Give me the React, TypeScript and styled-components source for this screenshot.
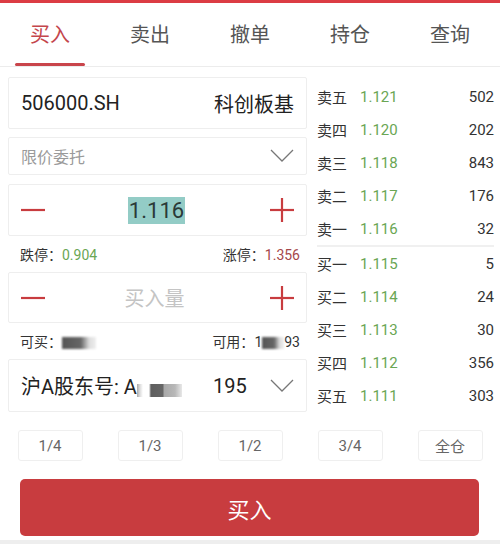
import React from 'react'
import styled, { createGlobalStyle } from 'styled-components'

const GlobalStyle = createGlobalStyle`
  html, body {
    margin: 0;
    padding: 0;
    background: #ffffff;
  }
  body {
    width: 500px;
    height: 544px;
    overflow: hidden;
    font-family: Roboto, "Noto Sans CJK SC", sans-serif;
    color: #333;
  }
`

const RED = '#c83c3f'
const GREEN = '#6aa654'

const tabs = ['买入', '卖出', '撤单', '持仓', '查询']

const asks = [
  { label: '卖五', price: '1.121', vol: '502' },
  { label: '卖四', price: '1.120', vol: '202' },
  { label: '卖三', price: '1.118', vol: '843' },
  { label: '卖二', price: '1.117', vol: '176' },
  { label: '卖一', price: '1.116', vol: '32' },
]

const bids = [
  { label: '买一', price: '1.115', vol: '5' },
  { label: '买二', price: '1.114', vol: '24' },
  { label: '买三', price: '1.113', vol: '30' },
  { label: '买四', price: '1.112', vol: '356' },
  { label: '买五', price: '1.111', vol: '303' },
]

const fractions = ['1/4', '1/3', '1/2', '3/4', '全仓']

const Chevron = () => (
  <svg width="24" height="14" viewBox="0 0 24 14">
    <polyline points="1,1 12,12 23,1" fill="none" stroke="#777" strokeWidth="1.3" />
  </svg>
)

const Minus = () => (
  <svg width="24" height="24" viewBox="0 0 24 24">
    <line x1="0" y1="12" x2="24" y2="12" stroke={RED} strokeWidth="2.2" />
  </svg>
)

const Plus = () => (
  <svg width="24" height="24" viewBox="0 0 24 24">
    <line x1="0" y1="12" x2="24" y2="12" stroke={RED} strokeWidth="2.2" />
    <line x1="12" y1="0" x2="12" y2="24" stroke={RED} strokeWidth="2.2" />
  </svg>
)

const App = () => {
  return (
    <Page>
      <GlobalStyle />
      <TopStrip />
      <TabBar>
        {tabs.map((t, i) => (
          <Tab key={t} $active={i === 0}>
            {t}
          </Tab>
        ))}
      </TabBar>

      <Main>
        {/* ORDER FORM */}
        <Form>
          <Field $h={52}>
            <CodeText>506000.SH</CodeText>
            <CodeText>科创板基</CodeText>
          </Field>

          <Field $h={38} $gap={8}>
            <Placeholder>限价委托</Placeholder>
            <Chevron />
          </Field>

          <Field $h={52} $gap={9}>
            <Minus />
            <PriceValue>1.116</PriceValue>
            <Plus />
          </Field>

          <InfoRow>
            <span>
              跌停：<Num $color={GREEN}>0.904</Num>
            </span>
            <span>
              涨停：<Num $color="#a5474a">1.356</Num>
            </span>
          </InfoRow>

          <Field $h={51}>
            <Minus />
            <QtyPlaceholder>买入量</QtyPlaceholder>
            <Plus />
          </Field>

          <InfoRow>
            <span>
              可买：<Blur $w={34} />
            </span>
            <span>
              可用：<Num $color="#333">1</Num>
              <Blur $w={22} />
              <Num $color="#333">93</Num>
            </span>
          </InfoRow>

          <Field $h={53}>
            <Holder>
              沪A股东号: A<HolderBlur />
              <HolderTail>195</HolderTail>
            </Holder>
            <Chevron />
          </Field>
        </Form>

        {/* ORDER BOOK */}
        <Book>
          {asks.map((r) => (
            <BookRow key={r.label}>
              <BookLabel>{r.label}</BookLabel>
              <BookPrice>{r.price}</BookPrice>
              <BookVol>{r.vol}</BookVol>
            </BookRow>
          ))}
          <BookDivider />
          {bids.map((r) => (
            <BookRow key={r.label}>
              <BookLabel>{r.label}</BookLabel>
              <BookPrice>{r.price}</BookPrice>
              <BookVol>{r.vol}</BookVol>
            </BookRow>
          ))}
        </Book>
      </Main>

      <FractionRow>
        {fractions.map((f) => (
          <FractionCell key={f}>
            <FractionButton>{f}</FractionButton>
          </FractionCell>
        ))}
      </FractionRow>

      <BuyButton>买入</BuyButton>
      <BottomStrip />
    </Page>
  )
}

export default App

const Page = styled.div`
  width: 500px;
  height: 544px;
  display: flex;
  flex-direction: column;
  background: #fff;
`

const TopStrip = styled.div`
  height: 3px;
  background: #dc3c44;
`

const TabBar = styled.div`
  height: 63px;
  display: flex;
  border-bottom: 1px solid #ececec;
`

const Tab = styled.div<{ $active?: boolean }>`
  flex: 1;
  position: relative;
  display: flex;
  align-items: center;
  justify-content: center;
  padding-bottom: 2px;
  font-size: 20px;
  color: ${(p) => (p.$active ? '#c4464c' : '#555')};

  &::after {
    content: '';
    display: ${(p) => (p.$active ? 'block' : 'none')};
    position: absolute;
    left: 15px;
    right: 15px;
    bottom: 0;
    height: 3px;
    border-radius: 2px;
    background: #c9454b;
  }
`

const Main = styled.div`
  display: flex;
  padding: 10px 6px 0 8px;
`

const Form = styled.div`
  width: 299px;
  display: flex;
  flex-direction: column;
`

const Field = styled.div<{ $h: number; $gap?: number }>`
  height: ${(p) => p.$h}px;
  margin-top: ${(p) => p.$gap || 0}px;
  box-sizing: border-box;
  border: 1px solid #eeeeee;
  border-radius: 2px;
  display: flex;
  align-items: center;
  justify-content: space-between;
  padding: 0 12px 0 12px;
  background: #fff;
`

const CodeText = styled.span`
  font-size: 20px;
  color: #222;
`

const Placeholder = styled.span`
  font-size: 16px;
  color: #9a9a9a;
`

const PriceValue = styled.span`
  font-size: 22px;
  line-height: 27px;
  color: #2a3a38;
  background: #93ccc6;
  padding: 0 1px;
  margin-right: 2px;
`

const QtyPlaceholder = styled.span`
  font-size: 20px;
  color: #c4c4c4;
  margin-right: 6px;
`

const InfoRow = styled.div`
  height: 36px;
  display: flex;
  align-items: center;
  justify-content: space-between;
  padding: 0 7px 0 12px;
  font-size: 14px;
  color: #333;
`

const Num = styled.span<{ $color: string }>`
  color: ${(p) => p.$color};
  font-size: 14px;
`

const Blur = styled.span<{ $w: number }>`
  display: inline-block;
  vertical-align: middle;
  width: ${(p) => p.$w}px;
  height: 12px;
  background: linear-gradient(90deg, #555 0%, #666 55%, #ddd 80%, #eee 100%);
  filter: blur(0.8px);
`

const HolderBlur = styled.span`
  display: inline-block;
  align-self: flex-end;
  margin-bottom: 14px;
  width: 45px;
  height: 13px;
  background: linear-gradient(
    90deg,
    #aaa 0px,
    #ddd 3px,
    #fff 6px,
    #fff 12px,
    #5e5e5e 14px,
    #666 26px,
    #a8a8a8 27px,
    #b8b8b8 38px,
    #e8e8e8 45px
  );
  filter: blur(0.5px);
`

const Holder = styled.span`
  height: 100%;
  font-size: 20px;
  color: #222;
  display: flex;
  align-items: center;
`

const HolderTail = styled.span`
  margin-left: 31px;
`

const Book = styled.div`
  flex: 1;
  margin-left: 10px;
  margin-top: 3px;
  display: flex;
  flex-direction: column;
`

const BookRow = styled.div`
  height: 33px;
  display: flex;
  align-items: center;
`

const BookLabel = styled.span`
  width: 43px;
  font-size: 15px;
  color: #333;
`

const BookPrice = styled.span`
  font-size: 15px;
  color: ${GREEN};
`

const BookVol = styled.span`
  margin-left: auto;
  font-size: 15px;
  color: #333;
`

const BookDivider = styled.div`
  height: 2px;
  background: #f0f0f0;
`

const FractionRow = styled.div`
  display: grid;
  grid-template-columns: repeat(5, 100px);
  padding-top: 18px;
`

const FractionCell = styled.div`
  display: flex;
  justify-content: center;
`

const FractionButton = styled.div`
  width: 65px;
  height: 31px;
  box-sizing: border-box;
  border: 1px solid #efefef;
  border-radius: 3px;
  display: flex;
  align-items: center;
  justify-content: center;
  font-size: 15px;
  color: #666;
`

const BuyButton = styled.div`
  margin: 18px 21px 0 20px;
  height: 57px;
  border-radius: 5px;
  background: ${RED};
  color: #fff;
  font-size: 22px;
  display: flex;
  align-items: center;
  justify-content: center;
`

const BottomStrip = styled.div`
  margin-top: auto;
  height: 4px;
  background: #eeeeee;
`
